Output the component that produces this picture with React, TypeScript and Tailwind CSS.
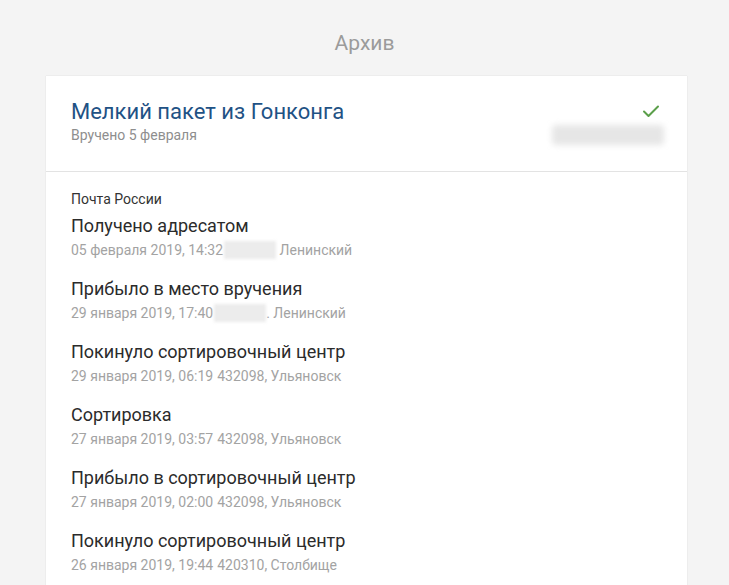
import type { FC } from "react";

type TrackEvent = {
	title: string;
	date: string;
	place: string;
	hidden?: boolean;
};

const events: TrackEvent[] = [
	{ title: "Получено адресатом", date: "05 февраля 2019, 14:32", place: " Ленинский", hidden: true },
	{ title: "Прибыло в место вручения", date: "29 января 2019, 17:40", place: ". Ленинский", hidden: true },
	{ title: "Покинуло сортировочный центр", date: "29 января 2019, 06:19", place: "432098, Ульяновск" },
	{ title: "Сортировка", date: "27 января 2019, 03:57", place: "432098, Ульяновск" },
	{ title: "Прибыло в сортировочный центр", date: "27 января 2019, 02:00", place: "432098, Ульяновск" },
	{ title: "Покинуло сортировочный центр", date: "26 января 2019, 19:44", place: "420310, Столбище" },
];

const CheckIcon: FC = () => (
	<svg width="18" height="14" viewBox="0 0 18 14" fill="none">
		<path d="M2 7.5l4.5 4.5L16 2.5" stroke="#5b9f4a" strokeWidth="2" strokeLinecap="round" strokeLinejoin="round" />
	</svg>
);

const EventRow: FC<{ event: TrackEvent }> = ({ event }) => (
	<div className="flex flex-col gap-[3px]">
		<p className="text-[18px] leading-[24px] text-[#2b2b2b]">{event.title}</p>
		<p className="flex items-center whitespace-pre text-[14px] leading-[18px] text-[#a3a3a3]">
			<span>{event.date}</span>
			{event.hidden ? (
				<span className="ml-[1px] inline-block h-[18px] w-[52px] bg-[#ececec] blur-[1.5px]" />
			) : (
				<span className="w-[4px]" />
			)}
			<span>{event.place}</span>
		</p>
	</div>
);

const App: FC = () => {
	return (
		<div className="min-h-[585px] bg-[#f4f4f4] font-['Roboto','Noto_Sans',sans-serif] overflow-hidden">
			<h1 className="pt-[29px] pb-[19px] text-center text-[21px] leading-[28px] text-[#9b9b9b]">Архив</h1>
			<div className="ml-[46px] w-[641px] bg-white shadow-[0_0_1px_rgba(0,0,0,0.18)]">
				<div className="flex items-start justify-between border-b border-[#e3e3e3] px-[25px] pt-[22px] pb-[26px]">
					<div className="flex flex-col">
						<h2 className="text-[22px] leading-[28px] text-[#1f5285]">Мелкий пакет из Гонконга</h2>
						<p className="text-[14px] leading-[18px] text-[#8e8e8e]">Вручено 5 февраля</p>
					</div>
					<div className="flex flex-col items-end pt-[6px]">
						<div className="pr-[2px]">
							<CheckIcon />
						</div>
						<div className="mt-[7px] -mr-[2px] h-[20px] w-[112px] rounded-[4px] bg-[#e6e6e6] blur-[3px]" />
					</div>
				</div>
				<div className="flex flex-col gap-[18px] px-[25px] pt-[18px] pb-[30px]">
					<div className="flex flex-col gap-[6px]">
						<p className="text-[14px] leading-[18px] text-[#333]">Почта России</p>
						<EventRow event={events[0]} />
					</div>
					{events.slice(1).map((e, i) => (
						<EventRow key={i} event={e} />
					))}
				</div>
			</div>
		</div>
	);
};

export default App;
